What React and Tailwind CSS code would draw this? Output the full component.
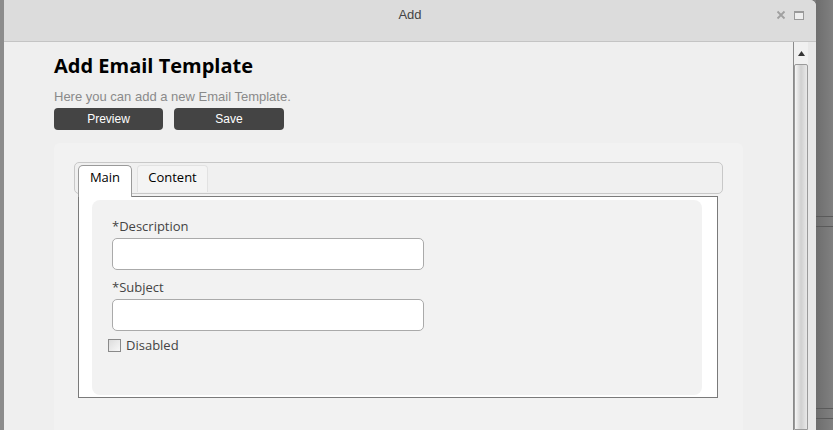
export default function App() {
  return (
    <div className="flex h-[430px] w-[833px] overflow-hidden bg-[#7d7d7d] font-['Liberation_Sans',Arial,sans-serif]">
      {/* page behind the dialog, left edge */}
      <div className="w-[4px] bg-[#8c8c8c]" />

      {/* dialog */}
      <div className="flex w-[812px] flex-col overflow-hidden rounded-tr-[6px] bg-[#efefef]">
        <div className="relative flex h-[42px] shrink-0 justify-center border-b border-[#c4c4c4] bg-[#dcdcdc] pt-[5px]">
          <span className="text-[13px] text-[#444]">Add</span>
          <div className="absolute right-[12px] top-[10px] flex items-center gap-[8px]">
            <svg width="10" height="10" viewBox="0 0 10 10">
              <path d="M1.5 1.5 L8.5 8.5 M8.5 1.5 L1.5 8.5" stroke="#a0a0a0" strokeWidth="1.8" />
            </svg>
            <div className="h-[9px] w-[10px] border border-[#9a9a9a] border-t-[2px] bg-[#eee]" />
          </div>
        </div>

        <div className="flex min-h-0 flex-1">
          <div className="flex-1 pl-[50px] pr-[50px] pt-[10px]">
            <h1 className="font-['Open_Sans',sans-serif] text-[20px] font-bold leading-[28px] text-black">
              Add Email Template
            </h1>
            <p className="mt-[9px] text-[13px] leading-[15px] text-[#8a8a8a]">
              Here you can add a new Email Template.
            </p>
            <div className="mt-[4px] flex gap-[11px]">
              <button className="h-[22px] w-[109px] rounded-[4px] bg-[#444] text-[12px] text-white">Preview</button>
              <button className="h-[22px] w-[110px] rounded-[4px] bg-[#444] text-[12px] text-white">Save</button>
            </div>

            <div className="mt-[13px] h-[300px] rounded-[6px] bg-[#f2f2f2] px-[20px] pt-[19px] font-['Open_Sans',sans-serif]">
              {/* tab bar */}
              <div className="flex h-[32px] gap-[5px] rounded-[5px] border border-[#c8c8c8] bg-[#f0f0f0] pl-[3px] pt-[2px]">
                <div className="relative z-10 flex h-[32px] w-[54px] justify-center rounded-t-[5px] border border-b-0 border-[#9a9a9a] bg-white pt-[2px] text-[13px] text-black">
                  Main
                </div>
                <div className="flex h-[27px] w-[71px] justify-center rounded-t-[4px] border border-b-0 border-[#e2e2e2] bg-[#f4f4f4] pt-[2px] text-[13px] text-black">
                  Content
                </div>
              </div>

              {/* tab panel */}
              <div className="ml-[4px] mr-[5px] mt-[2px] border border-[#7a7a7a] bg-white pb-[2px] pl-[13px] pr-[15px] pt-[3px]">
                <div className="h-[195px] rounded-[8px] bg-[#f2f2f2] pl-[20px] pt-[16px] text-[13px] text-[#444]">
                  <div className="h-[20px] leading-[20px]">*Description</div>
                  <div className="mt-[2px] h-[32px] w-[312px] rounded-[5px] border border-[#aaa] bg-white" />
                  <div className="mt-[7px] h-[20px] leading-[20px]">*Subject</div>
                  <div className="mt-[2px] h-[32px] w-[312px] rounded-[5px] border border-[#aaa] bg-white" />
                  <div className="-ml-[4px] mt-[4px] flex h-[20px] items-center gap-[5px]">
                    <div className="h-[13px] w-[13px] border border-[#8a8a8a] bg-gradient-to-br from-[#dcdcdc] to-[#f8f8f8]" />
                    <span className="leading-[20px]">Disabled</span>
                  </div>
                </div>
              </div>
            </div>
          </div>

          {/* scrollbar */}
          <div className="flex w-[23px] shrink-0 border-l border-[#8a8a8a] bg-[#f0f0f0]">
            <div className="flex w-[14px] flex-col items-center">
              <div className="flex h-[22px] items-center justify-center">
                <svg width="7" height="5" viewBox="0 0 7 5">
                  <path d="M0 5 L3.5 0 L7 5 Z" fill="#333" />
                </svg>
              </div>
              <div className="flex-1 w-[14px] rounded-t-[2px] border border-[#9a9a9a] bg-gradient-to-r from-[#f6f6f6] via-[#d0d0d0] to-[#e8e8e8]" />
            </div>
            <div className="flex-1 bg-[#e8e8e8]" />
          </div>
        </div>
      </div>

      {/* page behind the dialog, right edge */}
      <div className="flex flex-1 flex-col bg-gradient-to-r from-[#6e6e6e] to-[#808080]">
        <div className="h-[216px]" />
        <div className="h-[11px] border-y border-[#5a5a5a]" />
        <div className="h-[181px]" />
        <div className="h-[11px] border-y border-[#5a5a5a]" />
      </div>
    </div>
  );
}
